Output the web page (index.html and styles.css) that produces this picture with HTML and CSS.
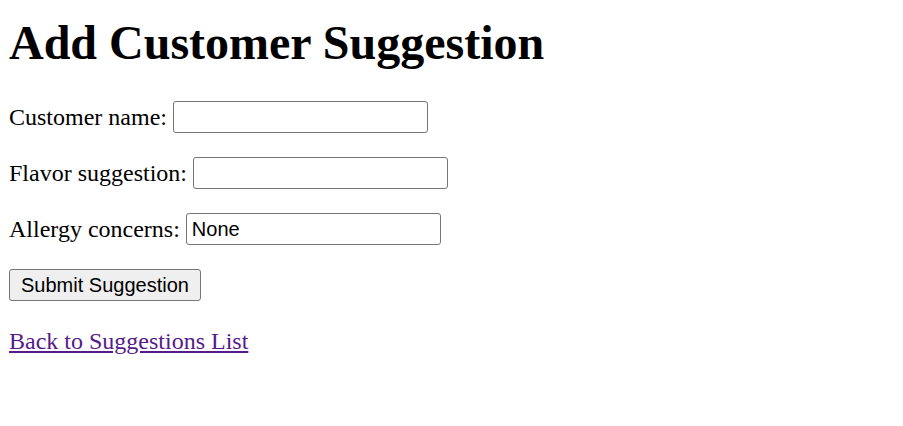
FILE: index.html
```html
<!DOCTYPE html>
<html>
<head>
<meta charset="utf-8">
<title>Add Customer Suggestion</title>
<link rel="stylesheet" href="styles.css">
</head>
<body>
<h1 class="title">Add Customer Suggestion</h1>
<form class="form">
  <p class="row"><label class="label" for="name">Customer name:</label> <input class="field" id="name" type="text"></p>
  <p class="row"><label class="label" for="flavor">Flavor suggestion:</label> <input class="field" id="flavor" type="text"></p>
  <p class="row"><label class="label" for="allergy">Allergy concerns:</label> <input class="field" id="allergy" type="text" value="None"></p>
  <p class="row"><button class="submit" type="submit">Submit Suggestion</button></p>
</form>
<p class="back"><a class="back-link" href="#">Back to Suggestions List</a></p>
</body>
</html>
```
FILE: styles.css
```css
body {
  margin: 8px 8px 8px 9px;
  font-family: "Liberation Serif", "Times New Roman", serif;
  font-size: 24px;
  color: #000;
  background: #fff;
}
.title {
  font-size: 48px;
  font-weight: bold;
  margin: 7px 0 31px;
  line-height: normal;
}
.form {
  margin: 0;
}
.row {
  margin: 0 0 24px;
  height: 32px;
  display: flex;
  align-items: center;
}
.label {
  margin-right: 6px;
}
.field {
  box-sizing: border-box;
  width: 255px;
  height: 32px;
  border: 1px solid #767676;
  border-radius: 3px;
  padding: 1px 5px;
  font-family: "Liberation Sans", Arial, sans-serif;
  font-size: 20px;
  color: #000;
  background: #fff;
  margin: 0;
}
.submit {
  box-sizing: border-box;
  height: 32px;
  padding: 1px 11px;
  border: 1px solid #767676;
  border-radius: 3px;
  background: #efefef;
  font-family: "Liberation Sans", Arial, sans-serif;
  font-size: 20px;
  color: #000;
  margin: 0;
}
.back {
  margin: 27px 0 0;
}
.back-link {
  color: #551a8b;
}
```
